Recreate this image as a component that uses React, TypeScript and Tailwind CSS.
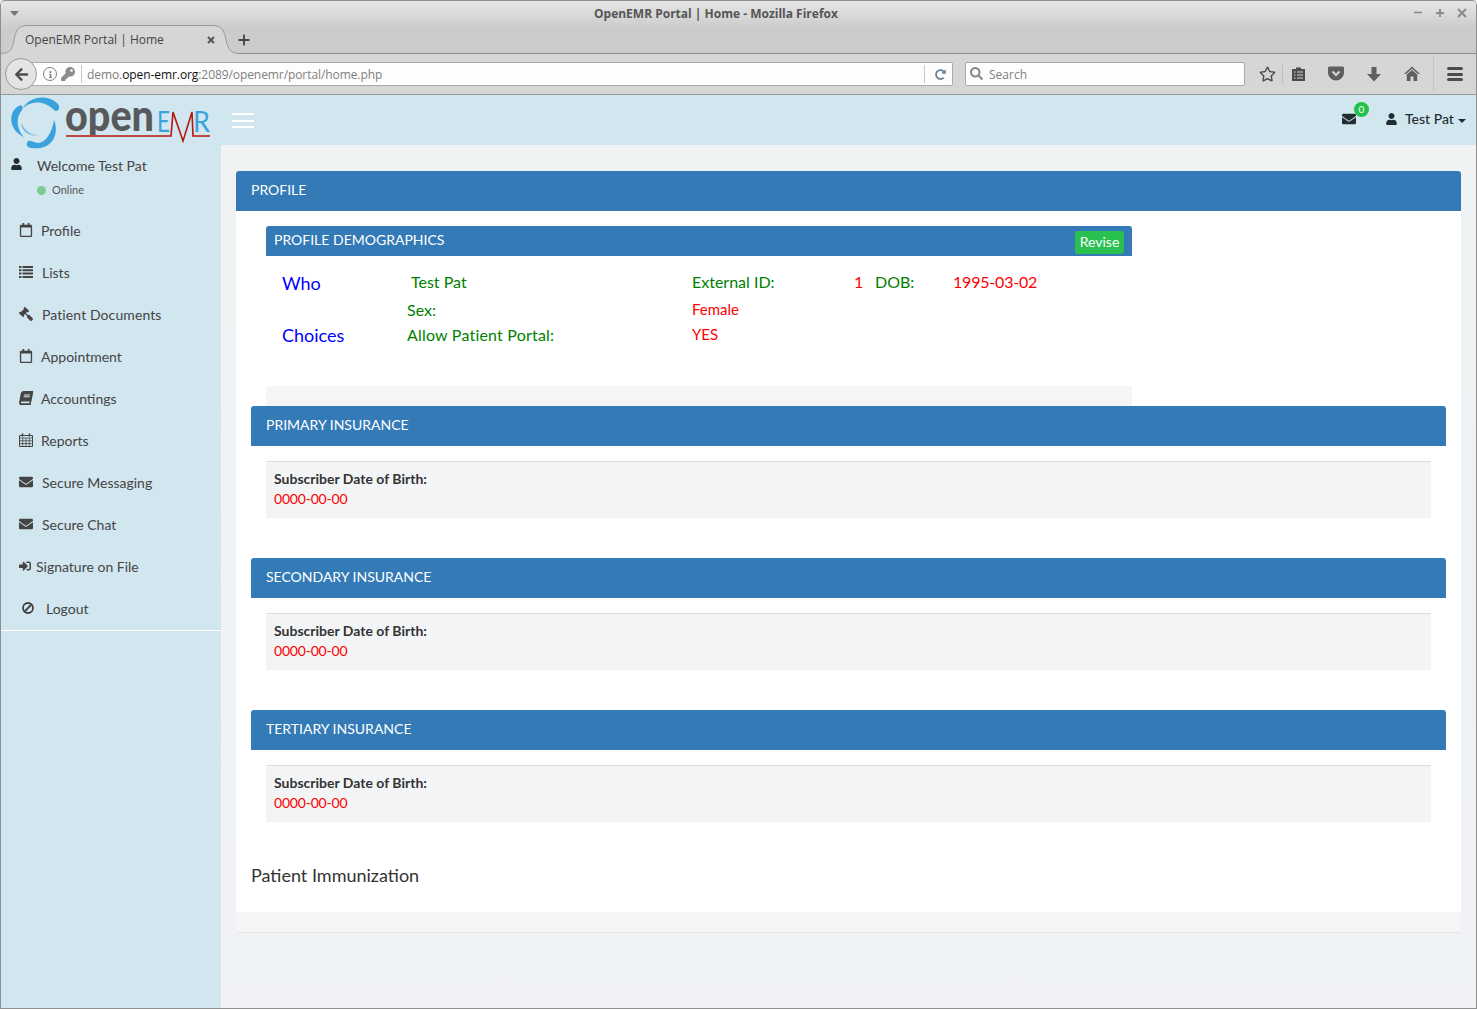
import React from "react";
import { FaRegCalendar, FaGavel, FaBook, FaEnvelope, FaSignInAlt, FaUser, FaRegStar, FaArrowLeft, FaInfo, FaKey, FaSearch, FaRedoAlt } from "react-icons/fa";

function ListIcon() {
  return (
    <svg width="14" height="12" viewBox="0 0 14 12" fill="currentColor">
      <path d="M0 0H2.500V2H0ZM3.500 0H14V2H3.500ZM0 3.300H2.500V5.300H0ZM3.500 3.300H14V5.300H3.500ZM0 6.600H2.500V8.600H0ZM3.500 6.600H14V8.600H3.500ZM0 9.900H2.500V11.900H0ZM3.500 9.900H14V11.900H3.500Z" />
    </svg>
  );
}

function GridCalendarIcon() {
  return (
    <svg width="14" height="14" viewBox="0 0 14 14" fill="none" stroke="currentColor">
      <path d="M0.500 2.500H13.500V13.500H0.500Z" />
      <path d="M0.500 5H13.500M0.500 7.800H13.500M0.500 10.600H13.500M3.700 5V13.500M7 5V13.500M10.300 5V13.500" strokeWidth="0.800" />
      <path d="M3.500 0.500V3.500M10.500 0.500V3.500" strokeWidth="1.600" />
    </svg>
  );
}

function BanIcon() {
  return (
    <svg className="ml-[3px]" width="12" height="12" viewBox="0 0 12 12" fill="none" stroke="currentColor" strokeWidth="1.800">
      <circle cx="6" cy="6" r="5" />
      <path d="M9.500 2.500L2.500 9.500" />
    </svg>
  );
}

const navItems: { label: string; icon: React.ReactNode; textX: string }[] = [
  { label: "Profile", icon: <FaRegCalendar className="w-[14px] h-[14px]" />, textX: "ml-[22px]" },
  { label: "Lists", icon: <ListIcon />, textX: "ml-[23px]" },
  { label: "Patient Documents", icon: <FaGavel className="w-[14px] h-[14px] scale-x-[-1]" />, textX: "ml-[23px] tracking-[0.1px]" },
  { label: "Appointment", icon: <FaRegCalendar className="w-[14px] h-[14px]" />, textX: "ml-[22px]" },
  { label: "Accountings", icon: <FaBook className="w-[14px] h-[14px] skew-x-[-10deg]" />, textX: "ml-[22px]" },
  { label: "Reports", icon: <GridCalendarIcon />, textX: "ml-[22px]" },
  { label: "Secure Messaging", icon: <FaEnvelope className="w-[14px] h-[14px]" />, textX: "ml-[23px]" },
  { label: "Secure Chat", icon: <FaEnvelope className="w-[14px] h-[14px]" />, textX: "ml-[23px]" },
  { label: "Signature on File", icon: <FaSignInAlt className="w-[12px] h-[12px]" />, textX: "ml-[17px]" },
  { label: "Logout", icon: <BanIcon />, textX: "ml-[27px]" },
];

function Insurance({ title, top }: { title: string; top: string }) {
  return (
    <section className={`absolute left-[15px] w-[1195px] ${top}`}>
      <div className="h-10 bg-[#337ab7] rounded-t-[3px] text-white text-[14px] leading-[38px] pl-[15px]">{title}</div>
      <div className="mt-[15px] mx-[15px] h-[57px] bg-[#f3f4f6] border-t border-[#dddddd] pl-2 pt-[7px] text-[14px] leading-5">
        <div className="font-bold text-[#333333]">Subscriber Date of Birth:</div>
        <div className="text-[#ff0000] tracking-[-0.2px]">0000-00-00</div>
      </div>
    </section>
  );
}

function Logo() {
  return (
    <svg className="absolute left-0 top-0 overflow-visible" width="221" height="50" viewBox="0 95 221 50">
      <defs>
        <clipPath id="openClip"><rect x="60" y="100" width="96" height="35" /></clipPath>
      </defs>
      <g fill="#3aa3dd">
        <path d="M19 106 C8 111 8 130 24 137 C17 130 15 118 22 110 C24 107 21 104 19 106Z" />
        <path d="M23 108 C30 96 48 94 58 104 C61 108 58 113 54 110 C45 101 33 100 23 108Z" />
        <path d="M28 141 C31 140 34 143 38 143 C46 143 52 132 54 120 C59 132 54 146 40 148 C34 149 25 148 27 143Z" />
        <path d="M21 123 C22 132 30 137 40 135 C31 136 25 131 21 123Z" opacity=".7" />
      </g>
      <g clipPath="url(#openClip)">
        <text x="65" y="131" fontFamily="Lato, sans-serif" fontWeight="900" fontSize="43" fill="#58595b" textLength="89" lengthAdjust="spacingAndGlyphs">open</text>
      </g>
      <text x="157" y="132" fontFamily="Lato, sans-serif" fontWeight="400" fontSize="29" fill="#3aa3dd" textLength="13" lengthAdjust="spacingAndGlyphs">E</text>
      <text x="193" y="132" fontFamily="Lato, sans-serif" fontWeight="400" fontSize="29" fill="#3aa3dd" textLength="17" lengthAdjust="spacingAndGlyphs">R</text>
      <path d="M66 136 H171 L173 112 L183 141 L192 112 L193 136 H210" fill="none" stroke="#b5160e" strokeWidth="1.600" />
    </svg>
  );
}

function BrowserChrome() {
  return (
    <div className="relative h-[95px] text-[#4d4d4d] font-[Open_Sans,sans-serif]">
      <div className="absolute inset-x-0 top-0 h-[54px] rounded-t-[5px] border-t border-[#8e8e8e] bg-[linear-gradient(#e6e6e6,#cccccc_27px)]" />
      <div className="absolute left-0 right-0 top-[53px] h-px bg-[#8f8f8f]" />
      <div className="absolute inset-x-0 top-[54px] h-[40px] bg-[#d6d6d6]" />
      <div className="absolute inset-x-0 top-[94px] h-px bg-[#999999]" />
      <div className="absolute top-[5px] left-[594px] text-[12px] leading-[17px] font-bold text-[#555555] whitespace-nowrap">OpenEMR Portal | Home - Mozilla Firefox</div>
      <svg className="absolute left-[10px] top-[11px]" width="10" height="6"><path d="M0 0H9L4.5 5Z" fill="#777" /></svg>
      <svg className="absolute right-[54px] top-[9px]" width="10" height="8"><path d="M1 3.500H9" stroke="#888" strokeWidth="1.500" /></svg>
      <svg className="absolute right-[32px] top-[8px]" width="10" height="10"><path d="M1 5H9M5 1V9" stroke="#888" strokeWidth="1.800" /></svg>
      <svg className="absolute right-[10px] top-[8px]" width="10" height="10"><path d="M1 1L9 9M9 1L1 9" stroke="#888" strokeWidth="1.800" /></svg>

      <svg className="absolute left-0 top-[24px]" width="240" height="31">
        <path d="M0 29.500 C10 29.500 12 26 14 16 C16 5 19 1.500 28 1.500 H212 C221 1.500 224 5 226 16 C228 26 231 29.500 240 29.500 V31 H0Z" fill="#d6d6d6" />
        <path d="M0 29.500 C10 29.500 12 26 14 16 C16 5 19 1.500 28 1.500 H212 C221 1.500 224 5 226 16 C228 26 231 29.500 240 29.500" fill="none" stroke="#9a9a9a" />
      </svg>
      <div className="absolute left-[25px] top-[31px] text-[12px] leading-[17px] text-[#444444] whitespace-nowrap">OpenEMR Portal | Home</div>
      <svg className="absolute left-[207px] top-[36px]" width="8" height="8"><path d="M1 1L7 7M7 1L1 7" stroke="#555" strokeWidth="2" /></svg>
      <svg className="absolute left-[237px] top-[33px]" width="14" height="14"><path d="M7 1.500V12.500M1.500 7H12.500" stroke="#444" strokeWidth="1.800" /></svg>

      <div className="absolute left-[22px] top-[62px] w-[931px] h-[24px] bg-[#fdfdfd] border border-[#ababab] rounded-r-[2px]" />
      <div className="absolute left-[5px] top-[58px] w-[32px] h-[32px] rounded-full bg-[#e4e4e4] border border-[#9b9b9b] flex items-center justify-center">
        <FaArrowLeft className="w-[15px] h-[15px] text-[#4d4d4d]" />
      </div>
      <div className="absolute left-[43px] top-[67px] w-[14px] h-[14px] rounded-full border border-[#808080] flex items-center justify-center">
        <FaInfo className="w-[7px] h-[7px] text-[#808080]" />
      </div>
      <FaKey className="absolute left-[61px] top-[67px] w-[14px] h-[14px] text-[#8c8c8c]" />
      <div className="absolute left-[81px] top-[65px] w-px h-[18px] bg-[#c9c9c9]" />
      <div className="absolute left-[87px] top-[66px] text-[12px] leading-[17px] tracking-[-0.08px] text-[#808080] whitespace-nowrap">
        demo.<span className="text-[#111111]">open-emr.org</span>:2089/openemr/portal/home.php
      </div>
      <div className="absolute left-[924px] top-[65px] w-px h-[18px] bg-[#c9c9c9]" />
      <FaRedoAlt className="absolute left-[935px] top-[69px] w-[11px] h-[11px] text-[#6f8291]" />

      <div className="absolute left-[965px] top-[62px] w-[280px] h-[24px] bg-[#fdfdfd] border border-[#ababab] rounded-[2px]" />
      <FaSearch className="absolute left-[970px] top-[67px] w-[13px] h-[13px] text-[#8a8a8a]" />
      <div className="absolute left-[989px] top-[66px] text-[12px] leading-[17px] text-[#808080]">Search</div>

      <FaRegStar className="absolute left-[1259px] top-[66px] w-[17px] h-[16px] text-[#4d4d4d]" />
      <div className="absolute left-[1282px] top-[65px] w-px h-[18px] bg-[#bdbdbd]" />
      <svg className="absolute left-[1291px] top-[66px]" width="15" height="16" viewBox="0 0 15 16">
        <path d="M1 3H5V1.500H10V3H14V15H1Z" fill="#4d4d4d" />
        <path d="M3 6H4.500M6 6H12M3 9H4.500M6 9H12M3 12H4.500M6 12H12" stroke="#d6d6d6" strokeWidth="1.200" />
      </svg>
      <svg className="absolute left-[1328px] top-[66px]" width="16" height="15" viewBox="0 0 16 15">
        <path d="M1.500 0.500H14.500C15.300 0.500 16 1 16 2V6.500C16 11 12 14.500 8 14.500C4 14.500 0 11 0 6.500V2C0 1 0.700 0.500 1.500 0.500Z" fill="#5f5f5f" />
        <path d="M4.500 5.500L8 9L11.500 5.500" fill="none" stroke="#d6d6d6" strokeWidth="2" />
      </svg>
      <svg className="absolute left-[1367px] top-[66px]" width="14" height="16" viewBox="0 0 14 16">
        <path d="M4.500 1H9.500V8H14L7 15.500L0 8H4.500Z" fill="#5f5f5f" />
      </svg>
      <svg className="absolute left-[1404px] top-[66px]" width="16" height="16" viewBox="0 0 16 16">
        <path d="M8 0.500L16 8H14L8 2.800L2 8H0Z" fill="#5f5f5f" />
        <path d="M2.800 8.500L8 4L13.200 8.500V15H9.500V10.500H6.500V15H2.800Z" fill="#5f5f5f" />
      </svg>
      <div className="absolute left-[1433px] top-[57px] w-px h-[34px] bg-[#c4c4c4]" />
      <div className="absolute left-[1447px] top-[67px] w-[16px] h-[14px] flex flex-col justify-between">
        <div className="h-[3px] bg-[#4d4d4d] rounded-sm" />
        <div className="h-[3px] bg-[#4d4d4d] rounded-sm" />
        <div className="h-[3px] bg-[#4d4d4d] rounded-sm" />
      </div>
    </div>
  );
}

export default function App() {
  return (
    <div className="relative w-[1477px] h-[1009px] overflow-hidden bg-[#f0f2f5] font-[Lato,sans-serif] text-[14px] text-[#444444]">
      <BrowserChrome />
      <div className="relative h-[914px]">
        <aside className="absolute left-0 top-[50px] bottom-0 w-[221px] bg-[#d2e6f0]">
          <FaUser className="absolute left-[11px] top-[13px] w-[11px] h-[12px] text-[#222d32]" />
          <div className="absolute left-[37px] top-[11px] leading-5 text-[#444444]">Welcome Test Pat</div>
          <div className="absolute left-[37px] top-[41px] w-[9px] h-[9px] rounded-full bg-[#7ccc92]" />
          <div className="absolute left-[52px] top-[37px] text-[11px] leading-4 text-[#555555]">Online</div>
          <nav className="absolute left-0 top-[64px] w-full h-[422px] border-b border-white">
            {navItems.map((item) => (
              <a key={item.label} className="relative flex items-center h-[42px] pl-[19px] text-[#444444]">
                <span className="absolute left-[19px] flex items-center">{item.icon}</span>
                <span className={item.textX}>{item.label}</span>
              </a>
            ))}
          </nav>
        </aside>

        <header className="absolute inset-x-0 top-0 h-[50px] bg-[#d2e6f0]">
          <Logo />
          <div className="absolute left-[232px] top-[18px] w-[22px] h-[15px] flex flex-col justify-between">
            <div className="h-[2px] bg-white" />
            <div className="h-[2px] bg-white" />
            <div className="h-[2px] bg-white" />
          </div>
          <FaEnvelope className="absolute left-[1342px] top-[17px] w-[14px] h-[14px] text-[#222d32]" />
          <div className="absolute left-[1354px] top-[7px] w-[15px] h-[15px] rounded-full bg-[#22c14b] text-white text-[10px] leading-[15px] text-center">0</div>
          <FaUser className="absolute left-[1386px] top-[18px] w-[11px] h-[12px] text-[#222d32]" />
          <div className="absolute left-[1405px] top-[14px] text-[14px] leading-5 font-medium text-[#222d32]">Test Pat</div>
          <div className="absolute left-[1458px] top-[24px] w-0 h-0 border-x-[4px] border-x-transparent border-t-[4px] border-t-[#222d32]" />
        </header>

        <main className="absolute left-[221px] right-0 top-[50px] bottom-0 bg-[linear-gradient(#eff3f4,#f0f2f5)]">
          <div className="absolute left-[15px] top-[26px] w-[1225px] h-[762px] rounded-[3px] bg-white border-b border-[#e3e3e3]">
            <div className="h-10 bg-[#337ab7] rounded-t-[3px] text-white text-[14px] leading-[38px] pl-[15px]">PROFILE</div>
            <div className="absolute left-0 right-0 bottom-0 h-5 bg-[#f5f5f5] rounded-b-[3px]" />

            <section className="absolute left-[30px] top-[55px] w-[866px] h-[180px]">
              <div className="relative h-[30px] bg-[#337ab7] rounded-t-[3px] text-white leading-[28px] pl-2">
                PROFILE DEMOGRAPHICS
                <div className="absolute right-2 top-[5px] w-[49px] h-[23px] text-center bg-[#28c04f] rounded-[3px] text-[14px] leading-[22px]">Revise</div>
              </div>
              <div className="absolute left-[16px] top-[45px] text-[18px] leading-6 text-[#0000ff]">Who</div>
              <div className="absolute left-[16px] top-[97px] text-[18px] leading-6 text-[#0000ff]">Choices</div>
              <div className="absolute left-[145px] top-[46px] text-[16px] leading-[20px] text-[#008000]">Test Pat</div>
              <div className="absolute left-[141px] top-[74px] text-[16px] leading-[20px] text-[#008000]">Sex:</div>
              <div className="absolute left-[141px] top-[99px] text-[16px] leading-[20px] tracking-[0.2px] text-[#008000]">Allow Patient Portal:</div>
              <div className="absolute left-[426px] top-[46px] text-[16px] leading-[20px] text-[#008000]">External ID:</div>
              <div className="absolute left-[426px] top-[73px] text-[15px] leading-[20px] text-[#ff0000]">Female</div>
              <div className="absolute left-[426px] top-[98px] text-[15px] leading-[20px] text-[#ff0000]">YES</div>
              <div className="absolute left-[588px] top-[46px] text-[16px] leading-[20px] text-[#ff0000]">1</div>
              <div className="absolute left-[609px] top-[46px] text-[16px] leading-[20px] text-[#008000]">DOB:</div>
              <div className="absolute left-[687px] top-[46px] text-[16px] leading-[20px] tracking-[-0.2px] text-[#ff0000]">1995-03-02</div>
              <div className="absolute inset-x-0 bottom-0 h-5 bg-[#f5f5f5]" />
            </section>

            <Insurance title="PRIMARY INSURANCE" top="top-[235px]" />
            <Insurance title="SECONDARY INSURANCE" top="top-[387px]" />
            <Insurance title="TERTIARY INSURANCE" top="top-[539px]" />

            <h4 className="absolute left-[15px] top-[691px] text-[18px] leading-[26px] font-normal text-[#333333]">Patient Immunization</h4>
          </div>
        </main>
      </div>
      <div className="absolute left-0 top-[4px] bottom-0 w-px bg-[#8f8f8f]" />
      <div className="absolute right-0 top-[4px] bottom-0 w-px bg-[#8f8f8f]" />
      <div className="absolute inset-x-0 bottom-0 h-px bg-[#8f8f8f]" />
    </div>
  );
}
